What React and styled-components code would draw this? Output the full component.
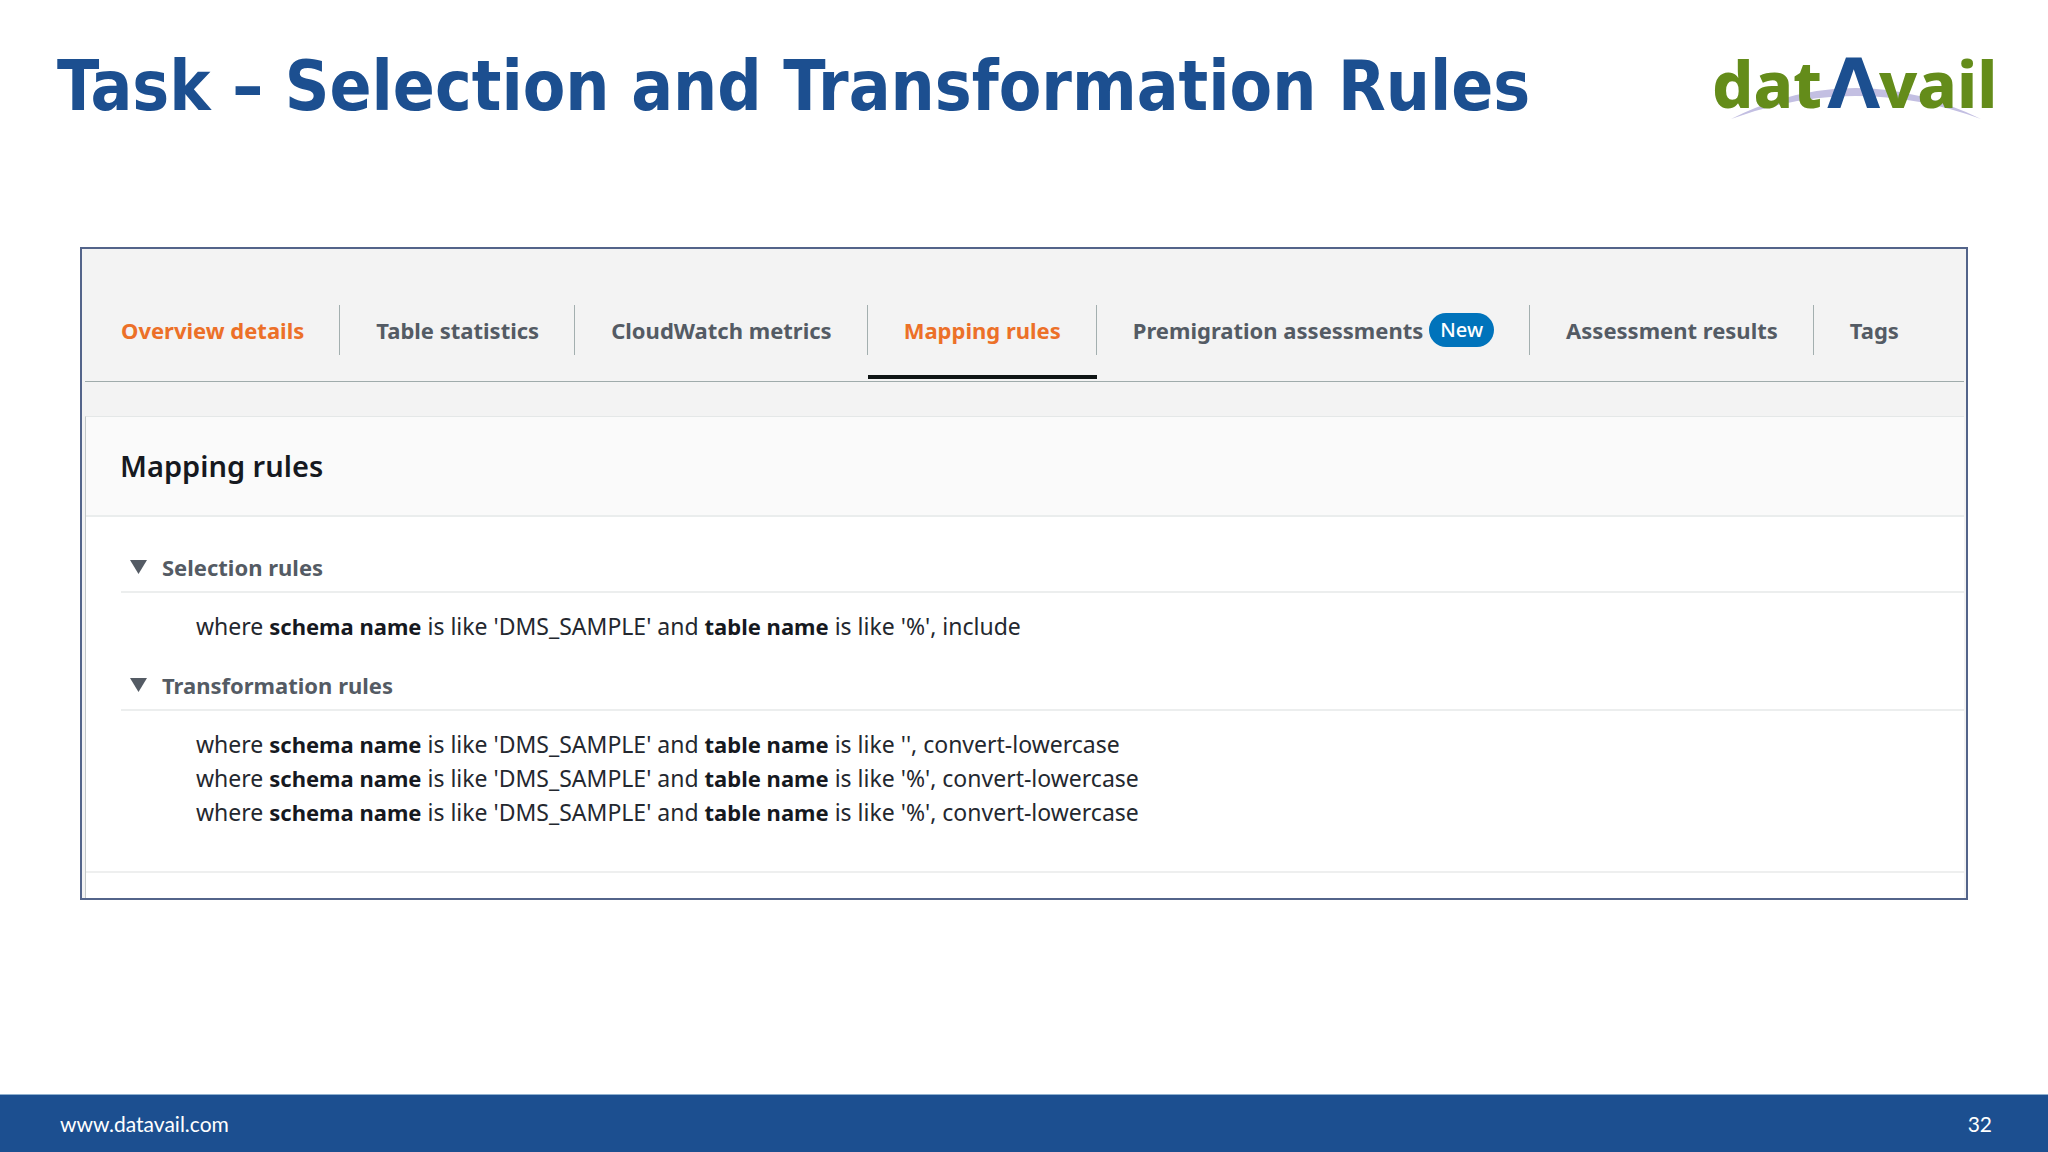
import React, { useState } from 'react';
import styled, { createGlobalStyle } from 'styled-components';

const GlobalStyle = createGlobalStyle`
  * {
    box-sizing: border-box;
  }
  body {
    margin: 0;
    background: #fff;
    font-family: 'Noto Sans', 'Open Sans', sans-serif;
  }
`;

const StyledSlide = styled.div`
  min-height: 100vh;
  display: flex;
  flex-direction: column;
`;

const StyledHeader = styled.header`
  display: flex;
  justify-content: space-between;
  align-items: center;
  padding: 38px 49px 0 57px;
`;

const StyledTitle = styled.h1`
  margin: 0;
  font-family: 'DejaVu Sans Condensed', 'DejaVu Sans', sans-serif;
  font-size: 69px;
  line-height: 96px;
  font-weight: 700;
  color: #1c4f90;
`;

const StyledLogo = styled.svg`
  width: 288px;
  height: 96px;
  flex-shrink: 0;
  font-weight: 800;
  font-size: 65px;
`;

const StyledLogoMark = styled.text`
  font-family: 'DejaVu Sans', sans-serif;
  font-weight: 700;
  font-size: 69px;
`;

const StyledFrame = styled.main`
  margin: 113px 80px 60px;
  border: 2px solid #53648a;
  background: #f3f3f3;
`;

const StyledTabs = styled.nav`
  display: flex;
  margin: 0 2px 0 3px;
  padding: 56px 0 2px;
  border-bottom: 1px solid #9fabab;
`;

const StyledTab = styled.div`
  padding-bottom: 20px;
  border-bottom: 4px solid ${(props) => (props.$active ? '#0f1414' : 'transparent')};
`;

const StyledTabLink = styled.a`
  display: flex;
  align-items: center;
  gap: 6px;
  height: 50px;
  padding: 0 35px 0 36px;
  border-right: 1px solid ${(props) => (props.$last ? 'transparent' : '#a3afaf')};
  font-size: 22px;
  line-height: 30px;
  font-weight: 700;
  color: ${(props) => (props.$highlight ? '#ec7028' : '#545b64')};
  text-decoration: none;
  white-space: nowrap;
`;

const StyledBadge = styled.span`
  padding: 0 11px;
  border-radius: 17px;
  background: #0073bb;
  color: #fff;
  font-size: 20px;
  line-height: 34px;
  font-weight: 500;
`;

const StyledPanel = styled.section`
  margin: 34px 2px 0 3px;
  padding-bottom: 25px;
  border-top: 1px solid #e4e7e7;
  border-left: 1px solid #c3c8c8;
  background: #fff;
`;

const StyledPanelHeader = styled.div`
  padding: 30px 34px;
  background: #fafafa;
  border-bottom: 2px solid #eaeded;
  h2 {
    margin: 0;
    font-size: 29px;
    line-height: 38px;
    font-weight: 600;
    color: #16191f;
  }
`;

const StyledPanelBody = styled.div`
  display: flex;
  flex-direction: column;
  gap: 27px;
  padding: 35px 0 42px 35px;
  border-bottom: 2px solid #eeefef;
`;

const StyledToggle = styled.button`
  display: flex;
  align-items: center;
  gap: 15px;
  width: 100%;
  padding: 0 9px 9px;
  border: 0;
  border-bottom: 2px solid #eceeee;
  background: none;
  font-family: inherit;
  font-size: 22px;
  line-height: 30px;
  font-weight: 700;
  color: #545b64;
  text-align: left;
`;

const StyledRuleList = styled.ul`
  margin: 0;
  padding: 16px 0 0 75px;
  list-style: none;
  font-size: 23px;
  line-height: 34px;
  color: #24282f;
  strong {
    font-size: 22px;
    color: #16191f;
  }
`;

const StyledFooter = styled.footer`
  display: flex;
  justify-content: space-between;
  align-items: center;
  margin-top: auto;
  height: 58px;
  padding: 0 56px 0 60px;
  border-top: 1px solid #8fb0cf;
  background: #1c4f90;
  color: #fff;
  font-family: Lato, sans-serif;
  font-size: 21px;
  a {
    color: inherit;
    text-decoration: none;
  }
`;

const tabs = [
  { label: 'Overview details', highlight: true },
  { label: 'Table statistics' },
  { label: 'CloudWatch metrics' },
  { label: 'Mapping rules', highlight: true, active: true },
  { label: 'Premigration assessments', badge: 'New' },
  { label: 'Assessment results' },
  { label: 'Tags' },
];

const ruleGroups = [
  {
    title: 'Selection rules',
    rules: [{ schema: 'DMS_SAMPLE', table: '%', action: 'include' }],
  },
  {
    title: 'Transformation rules',
    rules: [
      { schema: 'DMS_SAMPLE', table: '', action: 'convert-lowercase' },
      { schema: 'DMS_SAMPLE', table: '%', action: 'convert-lowercase' },
      { schema: 'DMS_SAMPLE', table: '%', action: 'convert-lowercase' },
    ],
  },
];

function Logo() {
  return (
    <StyledLogo viewBox="0 -12 288 96" role="img" aria-label="datAvail">
      {/* arc behind the letters */}
      <path d="M20 69 Q144 7 270 69 Q144 23 20 69 Z" fill="#c3bfe2" />
      <text x="1" y="58" fill="#648c1a">dat</text>
      <StyledLogoMark x="116" y="58" fill="#1c4f90">Λ</StyledLogoMark>
      <text x="168" y="58" fill="#648c1a">vail</text>
    </StyledLogo>
  );
}

function RuleGroup({ title, rules }) {
  const [open, setOpen] = useState(true);

  return (
    <div>
      <StyledToggle type="button" aria-expanded={open} onClick={() => setOpen(!open)}>
        <svg width="17" height="14" viewBox="0 0 17 14" aria-hidden="true">
          <path d={open ? 'M0 0 H17 L8.5 14 Z' : 'M3 0 L15 7 L3 14 Z'} fill="#545b64" />
        </svg>
        {title}
      </StyledToggle>
      {open && (
        <StyledRuleList>
          {rules.map((rule, index) => (
            <li key={index}>
              where <strong>schema name</strong> is like '{rule.schema}' and{' '}
              <strong>table name</strong> is like '{rule.table}', {rule.action}
            </li>
          ))}
        </StyledRuleList>
      )}
    </div>
  );
}

function App() {
  return (
    <StyledSlide>
      <GlobalStyle />
      <StyledHeader>
        <StyledTitle>Task – Selection and Transformation Rules</StyledTitle>
        <Logo />
      </StyledHeader>

      <StyledFrame>
        <StyledTabs>
          {tabs.map((tab, index) => (
            <StyledTab key={tab.label} $active={tab.active}>
              <StyledTabLink
                href="#"
                $highlight={tab.highlight}
                $last={index === tabs.length - 1}
                aria-current={tab.active ? 'page' : undefined}
              >
                {tab.label}
                {tab.badge && <StyledBadge>{tab.badge}</StyledBadge>}
              </StyledTabLink>
            </StyledTab>
          ))}
        </StyledTabs>

        <StyledPanel>
          <StyledPanelHeader>
            <h2>Mapping rules</h2>
          </StyledPanelHeader>
          <StyledPanelBody>
            {ruleGroups.map((group) => (
              <RuleGroup key={group.title} title={group.title} rules={group.rules} />
            ))}
          </StyledPanelBody>
        </StyledPanel>
      </StyledFrame>

      <StyledFooter>
        <a href="#">www.datavail.com</a>
        <span>32</span>
      </StyledFooter>
    </StyledSlide>
  );
}

export default App;
